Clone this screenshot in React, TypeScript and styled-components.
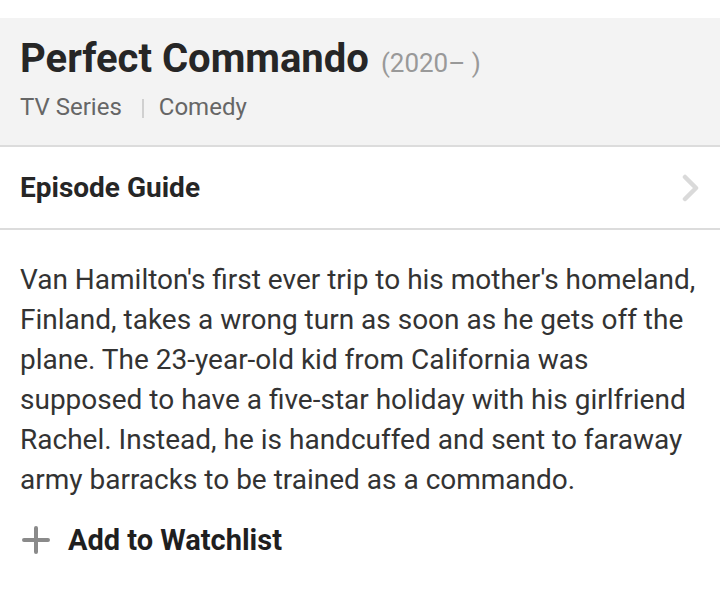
import React from "react";
import styled, { createGlobalStyle } from "styled-components";

const Global = createGlobalStyle`
  html, body { margin: 0; padding: 0; background: #ffffff; }
  body { font-family: Roboto, "Noto Sans", sans-serif; color: #333; }
`;

const Page = styled.div`
  padding-top: 18px;
`;

const Header = styled.header`
  background: #f3f3f3;
  border-bottom: 2px solid #dcdcdc;
  padding: 17px 20px 0;
  height: 110px;
  box-sizing: content-box;
`;

const TitleRow = styled.div`
  display: flex;
  align-items: baseline;
  gap: 12px;
`;

const Title = styled.h1`
  margin: 0;
  font-size: 40px;
  font-weight: 700;
  color: #262626;
  line-height: 48px;
`;

const Year = styled.span`
  font-size: 26px;
  color: #999;
  font-weight: 400;
`;

const Meta = styled.div`
  display: flex;
  align-items: center;
  margin-top: 9px;
  font-size: 24px;
  line-height: 30px;
  color: #666;
`;

const Sep = styled.span`
  width: 2px;
  height: 19px;
  background: #d0d0d0;
  margin: 2px 15px 0 20px;
`;

const GuideRow = styled.div`
  display: flex;
  align-items: center;
  justify-content: space-between;
  height: 81px;
  padding: 0 20px 0 20px;
  border-bottom: 2px solid #dcdcdc;
`;

const GuideLabel = styled.span`
  font-size: 28px;
  font-weight: 700;
  color: #262626;
`;

const Description = styled.p`
  margin: 0;
  padding: 30px 20px 0;
  font-size: 28px;
  line-height: 40px;
  color: #333;
`;

const Watch = styled.div`
  display: flex;
  align-items: center;
  gap: 18px;
  padding: 23px 20px 0 22px;
`;

const WatchLabel = styled.span`
  font-size: 29px;
  font-weight: 700;
  color: #1f1f1f;
`;

export default function App() {
  return (
    <Page>
      <Global />
      <Header>
        <TitleRow>
          <Title>Perfect Commando</Title>
          <Year>(2020– )</Year>
        </TitleRow>
        <Meta>
          <span>TV Series</span>
          <Sep />
          <span>Comedy</span>
        </Meta>
      </Header>
      <GuideRow>
        <GuideLabel>Episode Guide</GuideLabel>
        <svg width="18" height="28" viewBox="0 0 18 28">
          <path d="M3 3 L14 14 L3 25" fill="none" stroke="#dadada" strokeWidth="4.5" strokeLinecap="round" strokeLinejoin="round" />
        </svg>
      </GuideRow>
      <Description>
        Van Hamilton's first ever trip to his mother's homeland, Finland, takes a wrong turn as soon as he gets off the plane. The 23-year-old kid from California was supposed to have a five-star holiday with his girlfriend Rachel. Instead, he is handcuffed and sent to faraway army barracks to be trained as a commando.
      </Description>
      <Watch>
        <svg width="28" height="28" viewBox="0 0 28 28">
          <path d="M14 2 V26 M2 14 H26" stroke="#8a8a8a" strokeWidth="4" strokeLinecap="round" />
        </svg>
        <WatchLabel>Add to Watchlist</WatchLabel>
      </Watch>
    </Page>
  );
}
